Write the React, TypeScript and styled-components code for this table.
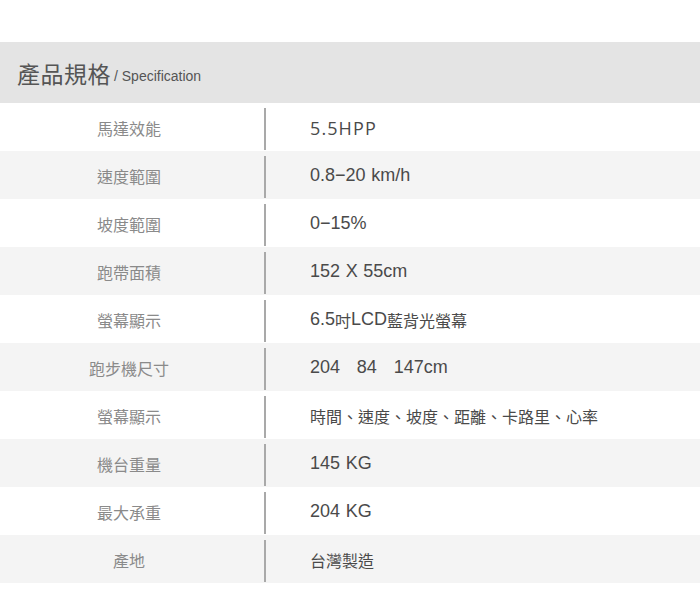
import React from 'react'
import styled, { createGlobalStyle } from "styled-components";

const GlobalStyle = createGlobalStyle`
    html, body {
        margin: 0;
        padding: 0;
        background: #ffffff;
    }
    body {
        font-family: "Liberation Sans", Arial, "Noto Sans CJK TC", sans-serif;
    }
`

const Page = styled.div`
    width: 700px;
    height: 610px;
    padding-top: 42px;
    box-sizing: border-box;
`

const Header = styled.div`
    height: 61px;
    background: #e4e4e4;
    display: flex;
    align-items: center;
    padding-left: 17px;
    padding-top: 1px;
    box-sizing: border-box;
`

const Title = styled.h2`
    margin: 0;
    font-size: 23px;
    font-weight: normal;
    color: #555555;
    font-family: "Noto Sans CJK TC", sans-serif;
    letter-spacing: 0.5px;
`

const SubTitle = styled.span`
    font-size: 14px;
    color: #555555;
    margin-left: 3px;
    margin-top: 5px;
    font-family: "Liberation Sans", Arial, sans-serif;
`

const Row = styled.div<{ $shaded: boolean }>`
    display: flex;
    height: 48px;
    padding: 5px 0 1px;
    box-sizing: border-box;
    background: ${(p) => (p.$shaded ? "#f4f4f4" : "#ffffff")};
`

const Label = styled.div`
    width: 258px;
    display: flex;
    align-items: center;
    justify-content: center;
    padding-bottom: 3px;
    font-size: 16px;
    color: #8a8a8a;
    font-family: "Liberation Sans", Arial, "Noto Sans CJK TC", sans-serif;
`

const Value = styled.div<{ $wide?: boolean }>`
    flex: 1;
    display: flex;
    align-items: center;
    margin-left: 6px;
    padding-left: 44px;
    padding-bottom: 3px;
    border-left: 2px solid #a9a9a9;
    font-size: 18px;
    color: #4a4a4a;
    white-space: pre;
    word-spacing: 0.6px;
    letter-spacing: ${(p) => (p.$wide ? "1.1px" : "0")};
    font-family: ${(p) =>
        p.$wide
            ? '"Open Sans", "Noto Sans CJK TC", sans-serif'
            : '"Liberation Sans", Arial, "Noto Sans CJK TC", sans-serif'};
`

const Cjk = styled.span`
    font-size: 16px;
    font-family: "Noto Sans CJK TC", sans-serif;
`

interface Spec {
    label: string
    value: string
    wide?: boolean
}

const specs: Spec[] = [
    { label: "馬達效能", value: "5.5HPP", wide: true },
    { label: "速度範圍", value: "0.8−20 km/h" },
    { label: "坡度範圍", value: "0−15%" },
    { label: "跑帶面積", value: "152 X 55cm" },
    { label: "螢幕顯示", value: "6.5吋LCD藍背光螢幕" },
    { label: "跑步機尺寸", value: "204   84   147cm" },
    { label: "螢幕顯示", value: "時間、速度、坡度、距離、卡路里、心率" },
    { label: "機台重量", value: "145 KG" },
    { label: "最大承重", value: "204 KG" },
    { label: "產地", value: "台灣製造" },
]

const cjkRun = /([\u3000-\u9fff\uff00-\uffef]+)/

// latin text in the source is set larger than the CJK glyphs
function renderValue(text: string) {
    return text.split(cjkRun).filter((part) => part !== "").map((part, i) =>
        cjkRun.test(part) ? <Cjk key={i}>{part}</Cjk> : <span key={i}>{part}</span>
    )
}

export default function App() {
    return (
        <Page>
            <GlobalStyle />
            <Header>
                <Title>產品規格</Title>
                <SubTitle>/ Specification</SubTitle>
            </Header>
            {
                specs.map((spec, key) => {
                    return (
                        <Row key={key} $shaded={key % 2 === 1}>
                            <Label>{spec.label}</Label>
                            <Value $wide={spec.wide}>{renderValue(spec.value)}</Value>
                        </Row>
                    )
                })
            }
        </Page>
    )
}
